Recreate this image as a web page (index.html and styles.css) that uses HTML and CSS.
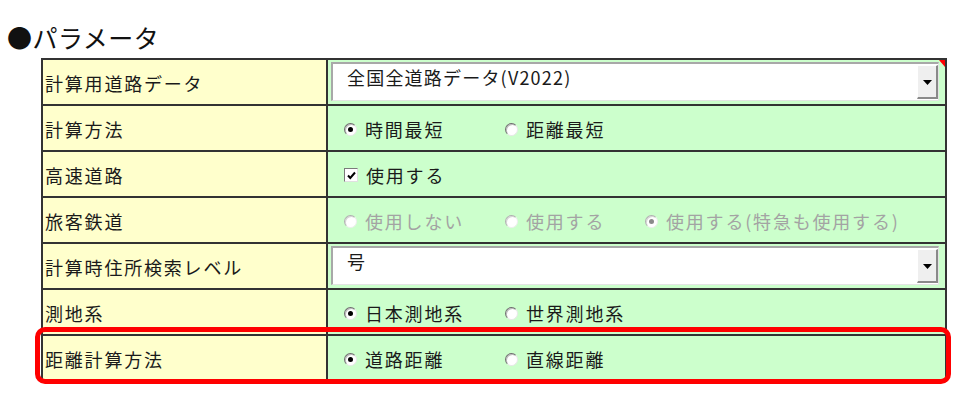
FILE: index.html
```html
<!DOCTYPE html>
<html lang="ja">
<head>
<meta charset="utf-8">
<title>パラメータ</title>
<link rel="stylesheet" href="styles.css">
</head>
<body>
<h1 class="title">●パラメータ</h1>
<div class="params">
  <div class="label">計算用道路データ</div>
  <div class="value select-cell has-comment">
    <div class="select">
      <span class="select-text">全国全道路データ(V2022)</span>
      <span class="drop"><svg width="9" height="5" viewBox="0 0 9 5"><path d="M0 0H9L4.5 5Z" fill="#000"/></svg></span>
    </div>
  </div>

  <div class="label">計算方法</div>
  <div class="value options">
    <span class="opt"><span class="radio on"></span>時間最短</span>
    <span class="opt"><span class="radio"></span>距離最短</span>
  </div>

  <div class="label">高速道路</div>
  <div class="value options">
    <span class="opt"><span class="check"><svg width="11" height="11" viewBox="0 0 11 11"><path d="M2 5.5L4.3 8L9 2.5" fill="none" stroke="#000" stroke-width="2"/></svg></span>使用する</span>
  </div>

  <div class="label">旅客鉄道</div>
  <div class="value options disabled">
    <span class="opt"><span class="radio"></span>使用しない</span>
    <span class="opt"><span class="radio"></span>使用する</span>
    <span class="opt"><span class="radio on"></span>使用する(特急も使用する)</span>
  </div>

  <div class="label">計算時住所検索レベル</div>
  <div class="value select-cell">
    <div class="select">
      <span class="select-text">号</span>
      <span class="drop"><svg width="9" height="5" viewBox="0 0 9 5"><path d="M0 0H9L4.5 5Z" fill="#000"/></svg></span>
    </div>
  </div>

  <div class="label">測地系</div>
  <div class="value options">
    <span class="opt"><span class="radio on"></span>日本測地系</span>
    <span class="opt"><span class="radio"></span>世界測地系</span>
  </div>

  <div class="row-mark">
    <div class="label">距離計算方法</div>
    <div class="value options">
      <span class="opt"><span class="radio on"></span>道路距離</span>
      <span class="opt"><span class="radio"></span>直線距離</span>
    </div>
  </div>
</div>
</body>
</html>
```

FILE: styles.css
```css
html, body {
  margin: 0;
  padding: 0;
  background: #fff;
}
body {
  width: 960px;
  height: 398px;
  overflow: hidden;
  font-family: "Noto Sans CJK JP", "Noto Sans", sans-serif;
  color: #1a1a1a;
}
.title {
  margin: 0;
  padding: 22px 0 0 7px;
  height: 36px;
  font-size: 25px;
  line-height: 30px;
  font-weight: 400;
  letter-spacing: 0.5px;
  color: #111;
}
.params {
  margin-left: 41px;
  display: grid;
  grid-template-columns: 285px 619px;
  grid-auto-rows: 46px;
  border-top: 2px solid #333;
  border-left: 2px solid #333;
  width: 904px;
}
.row-mark {
  display: contents;
}
.label, .value {
  box-sizing: border-box;
  border-right: 2px solid #333;
  border-bottom: 2px solid #333;
  display: flex;
  align-items: center;
  font-size: 18px;
  letter-spacing: 1.8px;
}
.label {
  background: #ffffcc;
  padding: 2px 0 0 2px;
}
.value {
  background: #ccffcc;
  position: relative;
}
.has-comment::after {
  content: "";
  position: absolute;
  top: 0;
  right: 0;
  border-top: 7px solid #f00;
  border-left: 6px solid transparent;
}
.select-cell {
  padding: 2px 6px 3px 3px;
}
.select {
  flex: 1;
  align-self: stretch;
  display: flex;
  align-items: flex-start;
  background: #fff;
  border-top: 2px solid #a8a8a8;
  border-left: 2px solid #a8a8a8;
  border-bottom: 1px solid #e4e4e4;
  border-right: 1px solid #e4e4e4;
  padding: 1px 0;
}
.select-text {
  flex: 1;
  padding: 0 0 0 14px;
  line-height: 24px;
  letter-spacing: 1.2px;
}
.drop {
  width: 18px;
  align-self: stretch;
  background: #efefef;
  border-top: 1px solid #fff;
  border-left: 1px solid #fff;
  border-right: 2px solid #8a8a8a;
  border-bottom: 2px solid #8a8a8a;
  display: flex;
  align-items: center;
  justify-content: center;
  padding-top: 2px;
}
.options {
  padding: 2px 0 0 16px;
  display: grid;
  grid-template-columns: 161px 140px auto;
  justify-content: start;
  align-items: center;
}
.opt {
  display: flex;
  align-items: center;
  white-space: nowrap;
}
.radio {
  box-sizing: border-box;
  width: 13px;
  height: 13px;
  border-radius: 50%;
  background: #fff;
  border: 1px solid;
  border-color: #6e6e6e #e8e8e8 #e8e8e8 #6e6e6e;
  box-shadow: inset 1px 1px 0 #bdbdbd;
  margin-right: 8px;
  display: flex;
  align-items: center;
  justify-content: center;
}
.radio.on::after {
  content: "";
  width: 5px;
  height: 5px;
  border-radius: 50%;
  background: #000;
}
.check {
  box-sizing: border-box;
  width: 14px;
  height: 14px;
  background: #fff;
  border: 1px solid;
  border-color: #7a7a7a #e0e0e0 #e0e0e0 #7a7a7a;
  margin-right: 8px;
  display: flex;
  align-items: center;
  justify-content: center;
}
.disabled {
  color: #a3a3a3;
}
.disabled .radio.on::after {
  background: #8a8a8a;
}
.disabled .radio {
  border-color: #b0b0b0 #eeeeee #eeeeee #b0b0b0;
  box-shadow: inset 1px 1px 0 #d6d6d6;
}
.row-mark .label {
  position: relative;
}
.row-mark .label::before {
  content: "";
  position: absolute;
  left: -8px;
  top: -9px;
  width: 916px;
  height: 57px;
  box-sizing: border-box;
  border: 5px solid #ff0000;
  border-radius: 10px;
  z-index: 2;
}
```
